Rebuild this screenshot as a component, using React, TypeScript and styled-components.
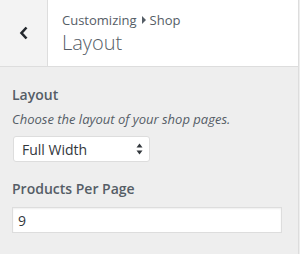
import React from 'react';
import styled, { createGlobalStyle } from 'styled-components';

const GlobalStyle = createGlobalStyle`
  html, body {
    margin: 0;
    padding: 0;
    background: #eeeeee;
    font-family: 'Open Sans', 'Noto Sans', sans-serif;
    color: #555d66;
  }
`;

const Panel = styled.div`
  width: 298px;
  height: 254px;
  border-right: 1px solid #dddddd;
  background: #eeeeee;
`;

const Header = styled.div`
  display: flex;
  height: 66px;
  background: #ffffff;
  border-bottom: 1px solid #dddddd;
`;

const BackButton = styled.div`
  width: 47px;
  display: flex;
  align-items: center;
  justify-content: center;
  background: #f3f3f3;
  border-right: 1px solid #dddddd;
  color: #23282d;
`;

const TitleBlock = styled.div`
  display: flex;
  flex-direction: column;
  padding: 10px 0 0 14px;
`;

const Crumb = styled.div`
  font-size: 13px;
  line-height: 20px;
  color: #555d66;
  display: flex;
  align-items: center;
`;

const Caret = styled.span`
  display: inline-block;
  width: 0;
  height: 0;
  border-top: 4px solid transparent;
  border-bottom: 4px solid transparent;
  border-left: 4px solid #555d66;
  margin: 0 4px 0 5px;
`;

const Title = styled.div`
  font-size: 20px;
  font-weight: 300;
  line-height: 26px;
  color: #555d66;
`;

const Body = styled.div`
  padding: 17px 12px 0 12px;
  display: flex;
  flex-direction: column;
`;

const Control = styled.div`
  display: flex;
  flex-direction: column;
  margin-bottom: 16px;
`;

const Label = styled.div`
  font-size: 14px;
  font-weight: 600;
  line-height: 22px;
  color: #555d66;
`;

const Description = styled.div`
  font-size: 13px;
  font-style: italic;
  line-height: 18px;
  margin: 4px 0 8px;
  color: #555d66;
`;

const SelectBox = styled.div`
  width: 137px;
  height: 26px;
  margin-left: 1px;
  box-sizing: border-box;
  background: #ffffff;
  border: 1px solid #dddddd;
  border-radius: 3px;
  display: flex;
  align-items: center;
  justify-content: space-between;
  padding: 0 6px 0 8px;
  font-size: 14px;
  color: #32373c;
`;

const Input = styled.div`
  margin-top: 7px;
  width: 270px;
  height: 26px;
  box-sizing: border-box;
  background: #ffffff;
  border: 1px solid #dddddd;
  box-shadow: inset 0 1px 2px rgba(0, 0, 0, 0.07);
  display: flex;
  align-items: center;
  padding: 0 5px;
  font-size: 14px;
  color: #32373c;
`;

export default function App() {
  return (
    <>
      <GlobalStyle />
      <Panel>
        <Header>
          <BackButton>
            <svg width="10" height="14" viewBox="0 0 10 14">
              <polyline points="7.5,1.5 2.5,7 7.5,12.5" fill="none" stroke="#23282d" strokeWidth="2.6" />
            </svg>
          </BackButton>
          <TitleBlock>
            <Crumb>
              Customizing<Caret />Shop
            </Crumb>
            <Title>Layout</Title>
          </TitleBlock>
        </Header>
        <Body>
          <Control>
            <Label>Layout</Label>
            <Description>Choose the layout of your shop pages.</Description>
            <SelectBox>
              <span>Full Width</span>
              <svg width="7" height="12" viewBox="0 0 7 12">
                <polygon points="3.5,0.5 6.5,4.5 0.5,4.5" fill="#32373c" />
                <polygon points="0.5,7.5 6.5,7.5 3.5,11.5" fill="#32373c" />
              </svg>
            </SelectBox>
          </Control>
          <Control>
            <Label>Products Per Page</Label>
            <Input>9</Input>
          </Control>
        </Body>
      </Panel>
    </>
  );
}
